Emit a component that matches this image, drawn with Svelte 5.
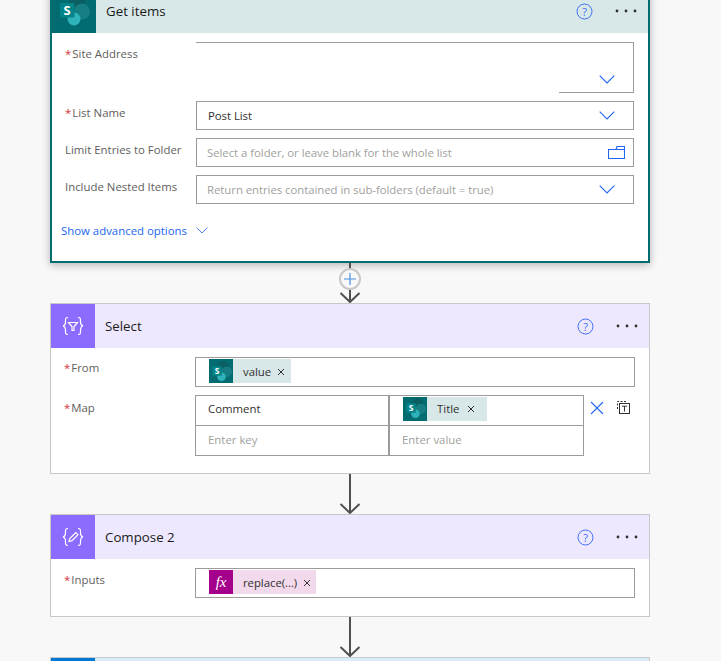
<script>
  const blue = '#2166f3';
</script>

{#snippet sp(size)}
  <svg class="logo" width={size} height={size} viewBox="0 0 32 32">
    <circle cx="19" cy="8" r="8" fill="#0b5f63" />
    <circle cx="24" cy="16.500" r="8" fill="#167e83" />
    <circle cx="16" cy="24" r="6.500" fill="#2fb3bb" />
    <rect x="2" y="8" width="14.500" height="14.500" rx="1" fill="#048489" />
    <text x="9.200" y="20" text-anchor="middle" class="logo-s">S</text>
  </svg>
{/snippet}

{#snippet chip(text, kind, wide = false)}
  <span class="chip {kind}" class:wide>
    <span class="chip-icon">
      {#if kind === 'fx'}
        <span class="fx-mark">fx</span>
      {:else}
        {@render sp(21)}
      {/if}
    </span>
    <span class="chip-text">{text}</span>
    <svg class="chip-x" width="8" height="8" viewBox="0 0 8 8"><path d="M1 1l6 6M7 1l-6 6" /></svg>
  </span>
{/snippet}

{#snippet chevron()}
  <svg class="chev" width="16" height="9" viewBox="0 0 16 9"><path d="M.7.7 8 8 15.300.7" /></svg>
{/snippet}

{#snippet actions()}
  <svg class="help" width="17" height="17" viewBox="0 0 17 17">
    <circle cx="8.500" cy="8.500" r="7.500" />
    <text x="8.500" y="12.500" text-anchor="middle">?</text>
  </svg>
  <span class="dots"><i></i><i></i><i></i></span>
{/snippet}

{#snippet connector(plus)}
  <div class="connector">
    <svg width="22" height="40" viewBox="0 0 22 40">
      <path class="line" d="M11 0V39" />
      <path class="line" d="M1.500 30 11 39 20.500 30" />
    </svg>
    {#if plus}
      <span class="plus">
        <svg width="12" height="12" viewBox="0 0 12 12"><path d="M6 0V12M0 6H12" /></svg>
      </span>
    {/if}
  </div>
{/snippet}

<div class="page">
  <section class="card teal">
    <header class="head">
      <span class="icon">{@render sp(32)}</span>
      <span class="title">Get items</span>
      {@render actions()}
    </header>
    <div class="body">
      <div class="row">
        <span class="label"><b>*</b>Site Address</span>
        <div class="field site">
          <span class="site-bottom"></span>
          {@render chevron()}
        </div>
      </div>
      <div class="row">
        <span class="label"><b>*</b>List Name</span>
        <div class="field"><span class="value">Post List</span>{@render chevron()}</div>
      </div>
      <div class="row">
        <span class="label">Limit Entries to Folder</span>
        <div class="field">
          <span class="ph">Select a folder, or leave blank for the whole list</span>
          <svg class="folder" width="17" height="13" viewBox="0 0 17 13">
            <path d="M.5 3.500H16.500V12.500H.5ZM8 3.500 9 .5H16.500V3.500" />
          </svg>
        </div>
      </div>
      <div class="row">
        <span class="label">Include Nested Items</span>
        <div class="field">
          <span class="ph">Return entries contained in sub-folders (default = true)</span>
          {@render chevron()}
        </div>
      </div>
      <div class="advanced">
        <span>Show advanced options</span>
        <svg width="12" height="7" viewBox="0 0 12 7"><path d="M.5.5 6 6 11.500.5" /></svg>
      </div>
    </div>
  </section>

  {@render connector(true)}

  <section class="card violet">
    <header class="head">
      <span class="icon">
        <svg width="44" height="44" viewBox="0 0 44 44" class="braces">
          <path d="M17 13.500c-3 0-2.500 2-2.500 4.500s-.5 3.500-2.500 4c2 .5 2.500 1.500 2.500 4s-.5 4.500 2.500 4.500" />
          <path d="M27 13.500c3 0 2.500 2 2.500 4.500s.5 3.500 2.500 4c-2 .5-2.500 1.500-2.500 4s.5 4.500-2.500 4.500" />
          <path d="M17.500 18.500h9l-3.500 4v4h-2v-4z" />
        </svg>
      </span>
      <span class="title">Select</span>
      {@render actions()}
    </header>
    <div class="body">
      <div class="row">
        <span class="label from"><b>*</b>From</span>
        <div class="field chips">{@render chip('value', 'sp')}</div>
      </div>
      <div class="row">
        <span class="label map-label"><b>*</b>Map</span>
        <div class="map-wrap">
          <div class="map">
            <div class="cell"><span class="value">Comment</span></div>
            <div class="cell chips">{@render chip('Title', 'sp', true)}</div>
            <div class="cell"><span class="ph">Enter key</span></div>
            <div class="cell"><span class="ph">Enter value</span></div>
          </div>
          <svg class="map-x" width="14" height="14" viewBox="0 0 14 14"><path d="M1 1 13 13M13 1 1 13" /></svg>
          <svg class="map-t" width="16" height="16" viewBox="0 0 16 16">
            <path class="dash" d="M2.500 10V2.500H11" />
            <rect x="4.500" y="4.500" width="10" height="10" />
            <path d="M7 7.200h5M9.500 7.200V12.500" />
          </svg>
        </div>
      </div>
    </div>
  </section>

  {@render connector(false)}

  <section class="card violet">
    <header class="head">
      <span class="icon">
        <svg width="44" height="44" viewBox="0 0 44 44" class="braces">
          <path d="M17 13.500c-3 0-2.500 2-2.500 4.500s-.5 3.500-2.500 4c2 .5 2.500 1.500 2.500 4s-.5 4.500 2.500 4.500" />
          <path d="M27 13.500c3 0 2.500 2 2.500 4.500s.5 3.500 2.500 4c-2 .5-2.500 1.500-2.500 4s.5 4.500-2.500 4.500" />
          <path d="M18 26.500l.8-3 6-6 2.200 2.200-6 6z" />
        </svg>
      </span>
      <span class="title">Compose 2</span>
      {@render actions()}
    </header>
    <div class="body compose">
      <div class="row">
        <span class="label"><b>*</b>Inputs</span>
        <div class="field chips">{@render chip('replace(...)', 'fx')}</div>
      </div>
    </div>
  </section>

  {@render connector(false)}

  <section class="card azure">
    <header class="head"><span class="icon"></span></header>
  </section>
</div>

<style>
  :global(body) {
    margin: 0;
    background: #f8f8f8;
  }
  .page {
    height: 661px;
    overflow: hidden;
    box-sizing: border-box;
    padding-left: 50px;
    font-family: "Open Sans", "Noto Sans", sans-serif;
    font-size: 11.4px;
    color: #605e5c;
    display: flex;
    flex-direction: column;
    align-items: flex-start;
  }
  .card {
    width: 600px;
    box-sizing: border-box;
    flex: none;
    background: #fff;
    border: 1px solid #c8c8c8;
  }
  .card.teal {
    margin-top: -13px;
    border: 2px solid #036c70;
    box-shadow: 0 2px 8px rgba(0, 0, 0, 0.28);
  }
  .head {
    height: 44px;
    display: flex;
    align-items: center;
    padding-right: 12px;
  }
  .teal .head { background: #d8e8e8; }
  .violet .head { background: #ede8fd; }
  .azure .head { background: #d9ecf9; }
  .icon {
    width: 44px;
    height: 44px;
    flex: none;
    display: flex;
    align-items: center;
    justify-content: center;
    margin-right: 10px;
  }
  .teal .icon { background: #036c70; }
  .violet .icon { background: #8c6cff; }
  .azure .icon { background: #0078d4; }
  .title {
    flex: 1;
    font-size: 13.300px;
    color: #1b1a19;
  }
  .logo-s {
    font: 700 13px "Open Sans", sans-serif;
    fill: #fff;
  }
  .braces path {
    fill: none;
    stroke: #fff;
    stroke-width: 1.2;
  }
  .help {
    margin-right: 23px;
  }
  .help circle {
    fill: none;
    stroke: #3e6ff5;
    stroke-width: 1;
  }
  .help text {
    font-size: 11px;
    fill: #3e6ff5;
  }
  .dots {
    display: flex;
    gap: 7px;
  }
  .dots i {
    width: 2px;
    height: 2px;
    background: #323130;
    border-radius: 50%;
    box-shadow: 0 0 0 0.4px #323130;
  }
  .body {
    padding: 9px 14px 17px 13px;
    display: flex;
    flex-direction: column;
    gap: 8px;
  }
  .body.compose {
    padding-bottom: 18px;
  }
  .teal .body {
    padding: 9px 14px 0 13px;
    height: 228px;
    box-sizing: border-box;
  }
  .row {
    display: flex;
    align-items: flex-start;
  }
  .label {
    width: 131px;
    flex: none;
    padding-top: 3px;
    line-height: 18px;
    white-space: nowrap;
  }
  .label.from { padding-top: 2px; }
  .label.map-label { padding-top: 4px; }
  .label b {
    color: #d13438;
    font-weight: 400;
    margin-right: 1px;
  }
  .field {
    flex: 1;
    height: 29px;
    box-sizing: border-box;
    border: 1px solid #9b9b9b;
    display: flex;
    align-items: center;
    padding: 0 18px 0 11px;
    background: #fff;
    letter-spacing: -0.05px;
  }
  .violet .field {
    height: 30px;
    padding-left: 13px;
    padding-bottom: 2px;
  }
  .site {
    height: 51px;
    border-left: none;
    border-bottom: none;
    position: relative;
    justify-content: flex-end;
    align-items: flex-end;
    padding-bottom: 9px;
  }
  .site-bottom {
    position: absolute;
    right: 0;
    bottom: 0;
    width: 74px;
    height: 1px;
    background: #9b9b9b;
  }
  .value {
    color: #323130;
    flex: 1;
  }
  .ph {
    color: #a19f9d;
    flex: 1;
  }
  .field .ph {
    margin-left: -1px;
  }
  .chev {
    flex: none;
    margin-left: auto;
  }
  .chev path,
  .folder path,
  .map-x path {
    fill: none;
    stroke: #2166f3;
    stroke-width: 1.1;
  }
  .folder {
    margin-right: -10px;
    flex: none;
  }
  .advanced {
    margin-top: 11px;
    margin-left: -4px;
    display: flex;
    align-items: center;
    gap: 9px;
    color: #2166f3;
  }
  .advanced svg {
    margin-top: -1px;
  }
  .advanced path {
    fill: none;
    stroke: #2166f3;
    stroke-width: 0.8;
  }
  .connector {
    width: 600px;
    height: 40px;
    flex: none;
    position: relative;
    display: flex;
    justify-content: center;
  }
  .connector > svg {
    display: block;
  }
  .line {
    fill: none;
    stroke: #505050;
    stroke-width: 2;
  }
  .plus {
    position: absolute;
    left: 289px;
    top: 5px;
    width: 22px;
    height: 22px;
    box-sizing: border-box;
    border-radius: 50%;
    border: 2px solid #c8c8c8;
    background: #f8f8f8;
    display: flex;
    align-items: center;
    justify-content: center;
  }
  .plus path {
    stroke: #4a90e2;
    stroke-width: 1.2;
    fill: none;
  }
  .chip {
    display: inline-flex;
    align-items: center;
    height: 24px;
    color: #323130;
  }
  .chip.sp { background: #d8e8e8; }
  .chip.fx { background: #f2d9ec; }
  .chip-icon {
    width: 24px;
    height: 24px;
    display: flex;
    align-items: center;
    justify-content: center;
    margin-right: 10px;
  }
  .sp .chip-icon { background: #036c70; }
  .fx .chip-icon { background: #a4008c; }
  .fx-mark {
    font: italic 400 15px "Liberation Serif", serif;
    color: #fff;
  }
  .chip-x {
    margin: 1px 6px 0 6px;
  }
  .chip.fx .chip-x {
    margin-right: 5px;
  }
  .chip.wide .chip-x {
    margin: 1px 12px 0 8px;
  }
  .chip-x path {
    stroke: #323130;
    stroke-width: 1;
    fill: none;
  }
  .map-wrap {
    flex: 1;
    display: flex;
    align-items: flex-start;
  }
  .map {
    width: 389px;
    height: 61px;
    box-sizing: border-box;
    border: 1px solid #9b9b9b;
    display: grid;
    grid-template-columns: 192px 1fr;
    grid-template-rows: 30px 1fr;
  }
  .cell {
    display: flex;
    align-items: center;
    padding: 0 0 2px 12px;
    box-sizing: border-box;
  }
  .cell:nth-child(-n + 2) {
    border-bottom: 1px solid #9b9b9b;
    padding-bottom: 4px;
  }
  .cell:nth-child(2n) {
    border-left: 2px solid #9b9b9b;
  }
  .cell.chips {
    padding-left: 13px;
  }
  .map-x {
    margin: 6px 0 0 6px;
  }
  .map-t {
    margin: 4px 0 0 11px;
    fill: none;
    stroke: #323130;
  }
  .map-t .dash {
    stroke-dasharray: 2 1.500;
  }
</style>
